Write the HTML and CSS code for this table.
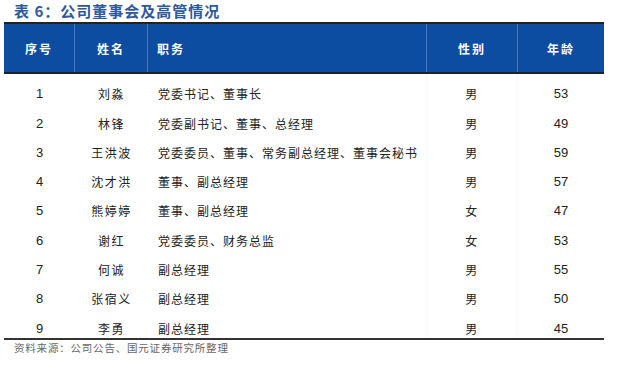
FILE: index.html
```html
<!DOCTYPE html>
<html lang="zh">
<head>
<meta charset="utf-8">
<link rel="stylesheet" href="styles.css">
</head>
<body>
<div class="page">
  <div class="title">表 6：公司董事会及高管情况</div>
  <div class="table">
    <div class="head">
      <div class="c c1">序号</div>
      <div class="c c2">姓名</div>
      <div class="c c3">职务</div>
      <div class="c c4">性别</div>
      <div class="c c5">年龄</div>
    </div>
    <div class="body">
      <div class="c c1 num">1</div><div class="c c2">刘淼</div><div class="c c3">党委书记、董事长</div><div class="c c4">男</div><div class="c c5 num">53</div>
      <div class="c c1 num">2</div><div class="c c2">林锋</div><div class="c c3">党委副书记、董事、总经理</div><div class="c c4">男</div><div class="c c5 num">49</div>
      <div class="c c1 num">3</div><div class="c c2">王洪波</div><div class="c c3">党委委员、董事、常务副总经理、董事会秘书</div><div class="c c4">男</div><div class="c c5 num">59</div>
      <div class="c c1 num">4</div><div class="c c2">沈才洪</div><div class="c c3">董事、副总经理</div><div class="c c4">男</div><div class="c c5 num">57</div>
      <div class="c c1 num">5</div><div class="c c2">熊婷婷</div><div class="c c3">董事、副总经理</div><div class="c c4">女</div><div class="c c5 num">47</div>
      <div class="c c1 num">6</div><div class="c c2">谢红</div><div class="c c3">党委委员、财务总监</div><div class="c c4">女</div><div class="c c5 num">53</div>
      <div class="c c1 num">7</div><div class="c c2">何诚</div><div class="c c3">副总经理</div><div class="c c4">男</div><div class="c c5 num">55</div>
      <div class="c c1 num">8</div><div class="c c2">张宿义</div><div class="c c3">副总经理</div><div class="c c4">男</div><div class="c c5 num">50</div>
      <div class="c c1 num">9</div><div class="c c2">李勇</div><div class="c c3">副总经理</div><div class="c c4">男</div><div class="c c5 num">45</div>
    </div>
  </div>
  <div class="source">资料来源：公司公告、国元证券研究所整理</div>
</div>
</body>
</html>
```
FILE: styles.css
```css
* { box-sizing: border-box; }
html, body { margin: 0; padding: 0; background: #fff; }
body { font-family: "Noto Sans CJK SC", "Noto Sans", sans-serif; color: #222; }

.page { width: 624px; height: 371px; padding-left: 4px; }

.title {
  height: 22px;
  padding-left: 10px;
  padding-top: 2px;
  font-size: 15px;
  line-height: 18px;
  font-weight: 700;
  color: #2d5a9b;
  letter-spacing: 1px;
}

.table { width: 600px; }

.head {
  display: grid;
  grid-template-columns: 71px 73px 279px 91px 86px;
  height: 52px;
  background: #0c4da1;
  border-top: 2px solid #222;
  border-bottom: 2px solid #222;
}
.head .c {
  display: flex;
  align-items: center;
  color: #fff;
  font-weight: 700;
  font-size: 12px;
  letter-spacing: 2px;
  border-right: 1px solid #4a78bb;
}
.head .c5 { border-right: none; }

.body {
  display: grid;
  grid-template-columns: 71px 73px 279px 91px 86px;
  grid-auto-rows: 29.3px;
  border-bottom: 2px solid #333;
}
.body .c {
  display: flex;
  align-items: flex-end;
  padding-bottom: 2px;
  line-height: 14px;
  font-size: 12px;
  color: #222;
  letter-spacing: 1.5px;
  white-space: nowrap;
}
.body .c3 { letter-spacing: 1px; }
.body .c4, .body .c3 { border-right: 1px solid #fafafa; }

.c1, .c2, .c4, .c5 { justify-content: center; }
.c3 { justify-content: flex-start; padding-left: 10px; }
.head .c3 { padding-left: 9px; }

.body .num {
  font-family: "Liberation Sans", Arial, sans-serif;
  font-size: 13px;
  letter-spacing: 0;
}

.source {
  padding-left: 10px;
  padding-top: 1px;
  font-size: 10.5px;
  line-height: 14px;
  color: #666;
  letter-spacing: 0.8px;
}
```
